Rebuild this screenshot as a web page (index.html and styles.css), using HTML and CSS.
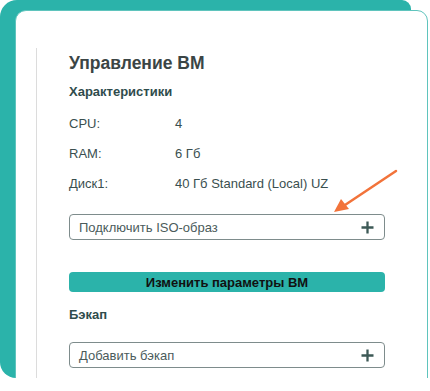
FILE: index.html
```html
<!DOCTYPE html>
<html lang="ru">
<head>
    <meta charset="UTF-8">
    <meta name="viewport" content="width=device-width, initial-scale=1.0">
    <title>Управление ВМ</title>
    <link rel="stylesheet" href="styles.css">
</head>
<body>

    <div class="frame">
        <div class="card">
            <div class="panel">
                <h1 class="title">Управление ВМ</h1>

                <h2 class="section">Характеристики</h2>
                <div class="specs">
                    <div class="spec-row"><span class="spec-label">CPU:</span><span class="spec-value">4</span></div>
                    <div class="spec-row"><span class="spec-label">RAM:</span><span class="spec-value">6 Гб</span></div>
                    <div class="spec-row"><span class="spec-label">Диск1:</span><span class="spec-value">40 Гб Standard (Local) UZ</span></div>
                </div>

                <div class="add-box iso-box">
                    <span>Подключить ISO-образ</span>
                    <svg class="plus" width="13" height="13" viewBox="0 0 13 13"><path d="M6.5 0.5v12M0.5 6.5h12"/></svg>
                </div>

                <button class="main-btn">Изменить параметры ВМ</button>

                <h2 class="section backup-title">Бэкап</h2>
                <div class="add-box backup-box">
                    <span>Добавить бэкап</span>
                    <svg class="plus" width="13" height="13" viewBox="0 0 13 13"><path d="M6.5 0.5v12M0.5 6.5h12"/></svg>
                </div>

                <h2 class="section license-title">Лицензионное ПО</h2>
            </div>

            <!-- pointer to the ISO field -->
            <svg class="arrow" width="70" height="50" viewBox="0 0 70 50">
                <path class="arrow-line" d="M65 5L14 39"/>
                <path class="arrow-head" d="M3 46L10 33L18 43Z"/>
            </svg>
        </div>
    </div>

</body>
</html>
```

FILE: styles.css
```css
body {
    margin: 0;
    background-color: #ffffff;
    font-family: 'Liberation Sans', Arial, sans-serif;
    overflow: hidden;
}

.frame {
    width: 411px;
    height: 378px;
    box-sizing: border-box;
    padding: 10px 0 0 15px;
    background-color: #2bb3aa;
    border-radius: 17px 9px 0 16px;
}

.card {
    position: relative;
    width: 413px;
    height: 379px;
    box-sizing: border-box;
    background-color: #ffffff;
    border: 1px solid #5fc4bd;
    border-radius: 11px 11px 11px 9px;
}

.panel {
    margin: 37px 0 0 20px;
    padding: 4px 0 0 32px;
    width: 316px;
    border-left: 1px solid #dcdcdc;
    height: 340px;
}

.title {
    margin: 0;
    font-size: 17.5px;
    line-height: 22px;
    font-weight: bold;
    color: #3b4545;
}

.section {
    margin: 9px 0 0;
    font-size: 13px;
    line-height: 18px;
    font-weight: bold;
    color: #2f4c4c;
}

.specs {
    margin-top: 7px;
}

.spec-row {
    display: flex;
    height: 30px;
    align-items: center;
    font-size: 13px;
    color: #3a4f4f;
}

.spec-label {
    width: 106px;
}

.add-box {
    display: flex;
    align-items: center;
    justify-content: space-between;
    height: 26px;
    box-sizing: border-box;
    padding: 0 10px 0 9px;
    border: 1.5px solid #7e8c8c;
    border-radius: 4px;
    font-size: 13px;
    color: #4b5b5b;
}

.iso-box {
    margin-top: 16px;
}

.plus path {
    stroke: #3d5956;
    stroke-width: 2.3;
    fill: none;
}

.main-btn {
    display: block;
    width: 100%;
    height: 20px;
    margin-top: 32px;
    padding: 0;
    border: none;
    border-radius: 4px;
    background-color: #2bb3aa;
    font-family: inherit;
    font-size: 13px;
    font-weight: bold;
    color: #111111;
}

.backup-title {
    margin-top: 14px;
}

.backup-box {
    margin-top: 18px;
}

.license-title {
    margin-top: 11px;
}

.arrow {
    position: absolute;
    left: 315px;
    top: 155px;
}

.arrow-line {
    stroke: #f2733a;
    stroke-width: 2.5;
    stroke-linecap: round;
    fill: none;
}

.arrow-head {
    fill: #f2733a;
}
```
